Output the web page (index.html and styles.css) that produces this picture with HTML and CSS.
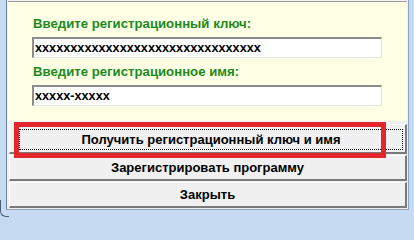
FILE: index.html
```html
<!DOCTYPE html>
<html lang="ru">
<head>
<meta charset="utf-8">
<title>Регистрация</title>
<link rel="stylesheet" href="styles.css">
</head>
<body>
<div class="frame">
  <div class="window">
    <div class="panel">
      <div class="label">Введите регистрационный ключ:</div>
      <div class="field">xxxxxxxxxxxxxxxxxxxxxxxxxxxxxxxx</div>
      <div class="label second">Введите регистрационное имя:</div>
      <div class="field">xxxxx-xxxxx</div>
    </div>
    <div class="buttons">
      <div class="btn default"><span class="focus">Получить регистрационный ключ и имя</span></div>
      <div class="btn">Зарегистрировать программу</div>
      <div class="btn">Закрыть</div>
    </div>
  </div>
  <div class="corner"></div>
  <div class="highlight"></div>
</div>
</body>
</html>
```
FILE: styles.css
```css
html, body {
  margin: 0;
  padding: 0;
  background: #c6dbf1;
}
body {
  width: 414px;
  height: 218px;
  font-family: "Liberation Sans", Arial, sans-serif;
  overflow: hidden;
}
.frame {
  position: relative;
  width: 414px;
  height: 218px;
}
.window {
  margin-left: 6px;
  width: 401px;
  height: 209px;
  background: #f0f0f0;
  border-left: 1px solid #6d87a8;
  border-right: 1px solid #8aa3c2;
  border-bottom: 1px solid #8aa3c2;
  display: flex;
  flex-direction: column;
}
.panel {
  margin: 1px 1px 0 1px;
  background: #ffffe6;
  border-top: 1px solid #a0a0a0;
  padding: 14px 25px 0 24px;
  height: 105px;
}
.label {
  color: #1c8a1c;
  font-weight: bold;
  font-size: 13.2px;
  line-height: 16px;
  padding-left: 1px;
}
.label.second {
  margin-top: 6px;
}
.field {
  margin-top: 5px;
  height: 18px;
  background: #fff;
  border-top: 2px solid #8c8c8c;
  border-left: 2px solid #8c8c8c;
  border-bottom: 1px solid #e3e3e3;
  border-right: 1px solid #e3e3e3;
  font-weight: bold;
  font-size: 12.7px;
  line-height: 18px;
  padding-left: 1px;
  color: #000;
}
.buttons {
  margin-top: 3px;
  display: flex;
  flex-direction: column;
  gap: 1px;
  padding: 0 1px 0 2px;
}
.btn {
  height: 23px;
  background: #f0f0f0;
  border-top: 1px solid #fff;
  border-left: 1px solid #fff;
  border-right: 2px solid #7a7a7a;
  border-bottom: 2px solid #7a7a7a;
  font-weight: bold;
  font-size: 13px;
  line-height: 24px;
  text-align: center;
  color: #000;
}
.btn.default {
  padding: 2px;
  height: 23px;
}
.focus {
  display: block;
  height: 19px;
  line-height: 19px;
  border: 1px dotted #000;
  margin: 2px 0 0 7px;
}
.corner {
  position: absolute;
  left: 0;
  top: 200px;
  width: 8px;
  height: 16px;
  border-left: 1px solid #4a5f78;
  border-bottom: 1px solid #4a5f78;
  border-bottom-left-radius: 6px;
}
.highlight {
  position: absolute;
  left: 14px;
  top: 122px;
  width: 362px;
  height: 26px;
  border: 5px solid #e3262b;
}
```
